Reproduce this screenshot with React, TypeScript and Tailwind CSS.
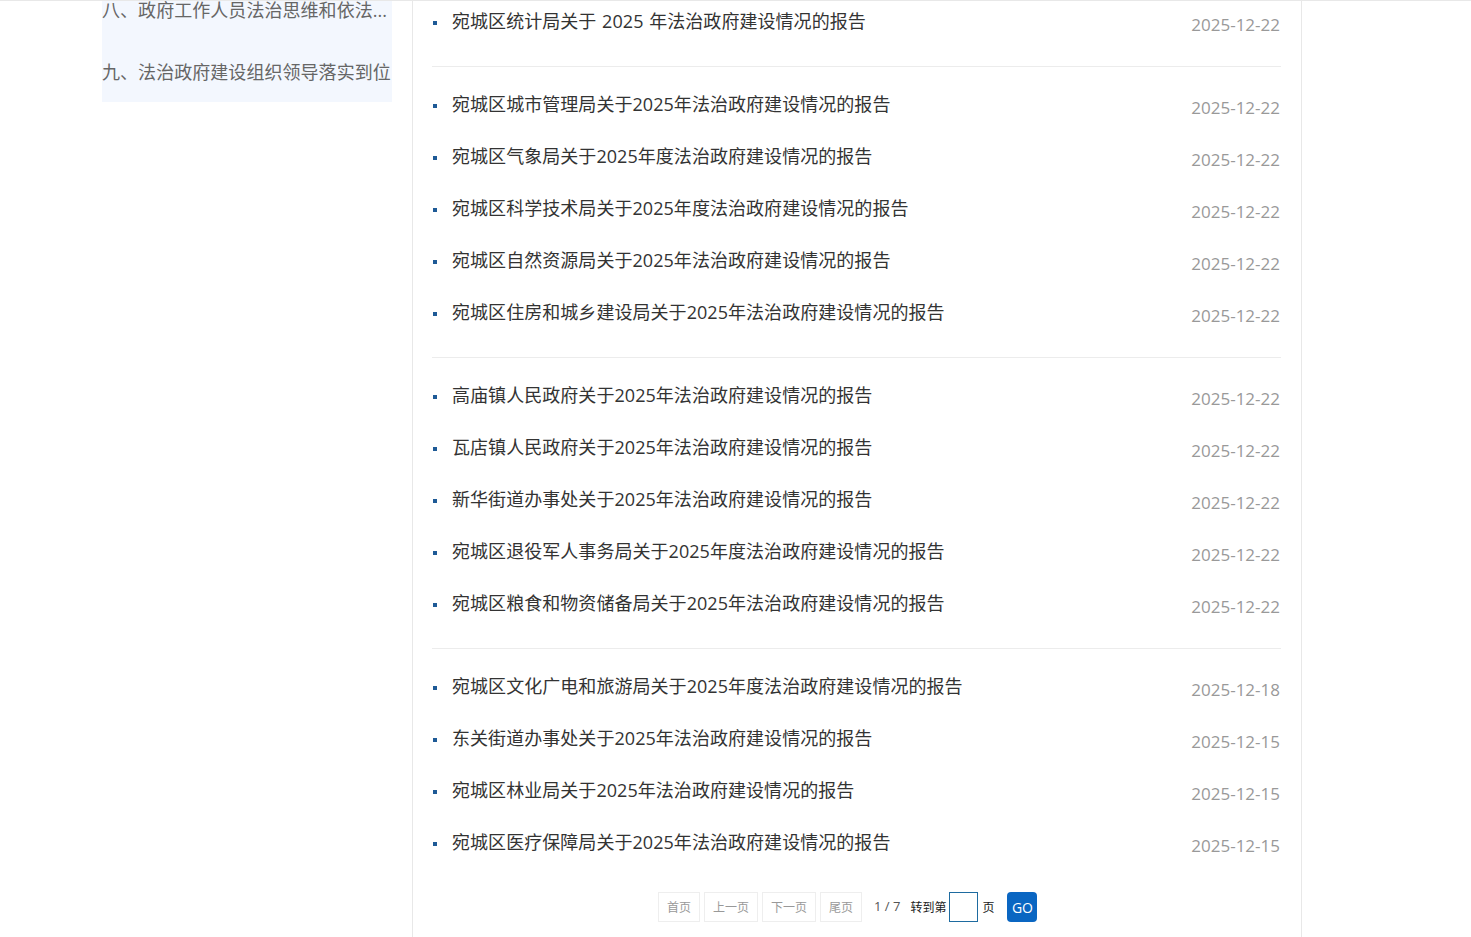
const groups = [
  [
    ["宛城区统计局关于 2025 年法治政府建设情况的报告", "2025-12-22"],
  ],
  [
    ["宛城区城市管理局关于2025年法治政府建设情况的报告", "2025-12-22"],
    ["宛城区气象局关于2025年度法治政府建设情况的报告", "2025-12-22"],
    ["宛城区科学技术局关于2025年度法治政府建设情况的报告", "2025-12-22"],
    ["宛城区自然资源局关于2025年法治政府建设情况的报告", "2025-12-22"],
    ["宛城区住房和城乡建设局关于2025年法治政府建设情况的报告", "2025-12-22"],
  ],
  [
    ["高庙镇人民政府关于2025年法治政府建设情况的报告", "2025-12-22"],
    ["瓦店镇人民政府关于2025年法治政府建设情况的报告", "2025-12-22"],
    ["新华街道办事处关于2025年法治政府建设情况的报告", "2025-12-22"],
    ["宛城区退役军人事务局关于2025年度法治政府建设情况的报告", "2025-12-22"],
    ["宛城区粮食和物资储备局关于2025年法治政府建设情况的报告", "2025-12-22"],
  ],
  [
    ["宛城区文化广电和旅游局关于2025年度法治政府建设情况的报告", "2025-12-18"],
    ["东关街道办事处关于2025年法治政府建设情况的报告", "2025-12-15"],
    ["宛城区林业局关于2025年法治政府建设情况的报告", "2025-12-15"],
    ["宛城区医疗保障局关于2025年法治政府建设情况的报告", "2025-12-15"],
  ],
];

const pagerLinks = ["首页", "上一页", "下一页", "尾页"];

export default function App() {
  return (
    <div className="h-[937px] overflow-hidden bg-white border-t border-[#e8e8e8] font-['Open_Sans','Noto_Sans_CJK_SC',sans-serif]">
      <div className="flex items-start pl-[102px] w-[1302px]">
        {/* Left nav */}
        <div className="w-[290px] h-[101px] bg-[#f3f7fe] text-[18px] leading-[24px] tracking-[0.05px] text-[#666] shrink-0">
          <div className="-mt-[3px] whitespace-nowrap">八、政府工作人员法治思维和依法...</div>
          <div className="mt-[38px] whitespace-nowrap">九、法治政府建设组织领导落实到位</div>
        </div>

        {/* List */}
        <div className="ml-[20px] w-[890px] h-[937px] border-x border-[#e8e8e8] pl-[19px] pr-[20px]">
          <div className="-mt-[6px]">
            {groups.map((rows, i) => (
              <ul key={i} className={`${i > 0 ? "pt-[11px] border-t border-[#ececec]" : ""} ${i === 3 ? "" : "pb-[19px]"}`}>
                {rows.map(([title, date]) => (
                  <li key={title} className="flex items-center justify-between h-[52px]">
                    <div className="flex items-center min-w-0">
                      <span className="w-[4px] h-[4px] ml-[1px] bg-[#1e5a96] mr-[15px] shrink-0 translate-y-[2px]" />
                      <span className="text-[18px] text-[#333] tracking-[0.05px] whitespace-nowrap [word-spacing:1px]">{title}</span>
                    </div>
                    <span className="text-[17px] text-[#999] mr-[1px] translate-y-[4px]">{date}</span>
                  </li>
                ))}
              </ul>
            ))}
          </div>

          {/* Pagination */}
          <div className="flex items-center mt-[24px] ml-[226px] h-[30px]">
            {pagerLinks.map((label) => (
              <span key={label} className="h-[30px] px-[8px] pt-[1px] mr-[4px] flex items-center border border-[#eee] text-[12px] text-[#999]">
                {label}
              </span>
            ))}
            <span className="ml-[8px] text-[13px] text-[#555]">1 / 7</span>
            <span className="ml-[10px] pt-[1px] text-[12px] text-[#222]">转到第</span>
            <span className="ml-[3px] w-[29px] h-[30px] border border-[#1e6ba0] bg-white" />
            <span className="ml-[4px] pt-[1px] text-[12px] text-[#222]">页</span>
            <span className="ml-[13px] w-[30px] h-[30px] rounded-[4px] bg-[#0a66c2] text-white text-[14px] flex items-center justify-center">GO</span>
          </div>
        </div>
      </div>
    </div>
  );
}
